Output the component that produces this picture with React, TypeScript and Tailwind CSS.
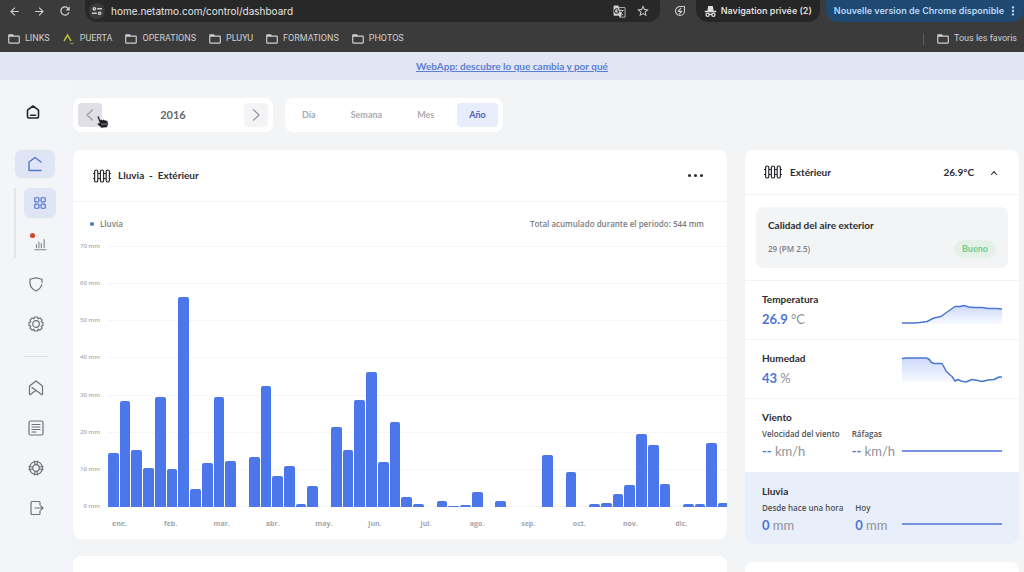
import type { ReactNode } from 'react'
import {
    MdArrowBack,
    MdArrowForward,
    MdFolderOpen,
    MdGTranslate,
    MdMoreVert,
    MdRefresh,
    MdStarBorder,
} from 'react-icons/md'

const MAX_MM = 70

// Weekly rainfall, in mm
const rain = [
    14.6, 28.5, 15.4, 10.4, 29.4, 10.3, 56.2, 4.9, 11.9, 29.4, 12.4, 0, 13.3, 32.4, 8.3, 10.9, 0.7, 5.7,
    0, 21.5, 15.2, 28.7, 36.3, 12, 22.7, 2.8, 0.8, 0, 1.5, 0.2, 0.6, 4.1, 0, 1.5, 0, 0, 0, 13.9, 0, 9.5,
    0, 0.9, 1.2, 3.6, 5.9, 19.6, 16.7, 6.3, 0, 0.7, 0.8, 17.1, 1.1,
]

const ticks = [70, 60, 50, 40, 30, 20, 10, 0]
const months = ['ene.', 'feb.', 'mar.', 'abr.', 'may.', 'jun.', 'jul.', 'ago.', 'sep.', 'oct.', 'nov.', 'dic.']
const periods = ['Día', 'Semana', 'Mes', 'Año']

function Svg({ size = 16, width = 1.2, children }: { size?: number; width?: number; children: ReactNode }) {
    return (
        <svg
            width={size}
            height={size}
            viewBox="0 0 16 16"
            fill="none"
            stroke="currentColor"
            strokeWidth={width}
            strokeLinecap="round"
            strokeLinejoin="round"
            aria-hidden="true"
        >
            {children}
        </svg>
    )
}

function FenceIcon() {
    return (
        <svg width="18" height="14" viewBox="0 0 18 14" fill="none" stroke="currentColor" strokeWidth="1.2" aria-hidden="true">
            <rect x="1.6" y="1" width="3.200" height="12" rx="1.600" />
            <rect x="7.400" y="1" width="3.200" height="12" rx="1.600" />
            <rect x="13.200" y="1" width="3.200" height="12" rx="1.600" />
            <path d="M0 4.500h1.600M0 9.500h1.600M4.800 4.500h2.600M4.800 9.500h2.600M10.600 4.500h2.600M10.600 9.500h2.600M16.400 4.500H18M16.400 9.500H18" />
        </svg>
    )
}

function Bookmark({ label, puerta }: { label: string; puerta?: boolean }) {
    return (
        <a href="#" className="flex items-center gap-1 whitespace-nowrap">
            {puerta ? (
                <svg width="14" height="14" viewBox="0 0 14 14" fill="none" aria-hidden="true">
                    <path d="m2 9 3.500-6L9 9" stroke="#b5bd3a" strokeWidth="1.500" />
                    <path d="M8 11.500h4" stroke="#7f8a3a" strokeWidth="1.200" />
                </svg>
            ) : (
                <MdFolderOpen size={14} />
            )}
            {label}
        </a>
    )
}

function Browser() {
    return (
        <header className="shrink-0 bg-[#3b3b3b] font-['Inter',sans-serif] text-[#cfcfcf]">
            <div className="flex h-[22px] items-center">
                <div className="flex w-[85px] shrink-0 items-center gap-3 pl-2">
                    <button aria-label="Atrás"><MdArrowBack size={13} /></button>
                    <button aria-label="Adelante"><MdArrowForward size={13} /></button>
                    <button aria-label="Recargar"><MdRefresh size={14} /></button>
                </div>
                <div className="flex h-full min-w-0 flex-1 items-center rounded-b-xl bg-[#282828] pr-2.5 pl-1">
                    <span className="flex size-4 items-center justify-center rounded-full bg-[#3b3b3b]">
                        <Svg size={12} width={1.8}>
                            <circle cx="4.500" cy="5" r="1.600" />
                            <path d="M9 5h5M2 11h5" />
                            <circle cx="11.500" cy="11" r="1.600" />
                        </Svg>
                    </span>
                    <input
                        aria-label="Dirección"
                        defaultValue="home.netatmo.com/control/dashboard"
                        className="ml-1.5 min-w-0 flex-1 bg-transparent text-[10px] text-[#e4e4e4] outline-none"
                    />
                    <button aria-label="Traducir" className="mr-2.5"><MdGTranslate size={13} /></button>
                    <button aria-label="Añadir a favoritos"><MdStarBorder size={14} /></button>
                </div>
                <button aria-label="Rendimiento" className="mr-2.5 ml-3.5">
                    <Svg size={12} width={1.4}>
                        <path d="M14 2v6a6 6 0 1 1-6-6zM9 4.500 5.500 8.500h5L7 12" />
                    </Svg>
                </button>
                <div className="flex h-full items-center gap-1 rounded-b-xl bg-[#262626] px-2 text-[9px] font-semibold whitespace-nowrap text-[#dedede]">
                    <Svg size={13} width={1.6}>
                        <path d="M5 6.500 5.800 2h4.400l.8 4.500z" fill="currentColor" />
                        <path d="M1.500 8h13" />
                        <circle cx="4.500" cy="12" r="2" />
                        <circle cx="11.500" cy="12" r="2" />
                        <path d="M6.500 11.500h3" />
                    </Svg>
                    Navigation privée (2)
                </div>
                <button className="ml-1.5 flex h-full items-center rounded-b-xl bg-[#1f4971] pr-1 pl-2 text-[9px] font-semibold whitespace-nowrap text-[#b9d8f7]">
                    Nouvelle version de Chrome disponible
                    <MdMoreVert size={14} className="ml-0.5" />
                </button>
            </div>
            <nav className="flex h-[30px] items-center gap-3 px-[7px] pt-1 font-['Roboto',sans-serif] text-[9px]">
                <Bookmark label="LINKS" />
                <Bookmark label="PUERTA" puerta />
                <Bookmark label="OPERATIONS" />
                <Bookmark label="PLUYU" />
                <Bookmark label="FORMATIONS" />
                <Bookmark label="PHOTOS" />
                <span className="ml-auto h-3 w-px bg-[#5c5c5c]" />
                <Bookmark label="Tous les favoris" />
            </nav>
        </header>
    )
}

function NavButton({ label, children }: { label: string; children: ReactNode }) {
    return (
        <button aria-label={label} className="flex h-10 w-[72px] items-center justify-center text-[#6f7178]">
            {children}
        </button>
    )
}

function Sidebar() {
    return (
        <nav className="w-[72px] shrink-0 bg-[#f4f5f8] pt-[22px]">
            <a href="#" aria-label="Inicio" className="ml-[23px] flex size-5 items-center justify-center text-[#26272b]">
                <Svg width={1.6}>
                    <path d="M2.500 6.200 8 2l5.500 4.200v6.300a1.500 1.500 0 0 1-1.500 1.500H4a1.500 1.500 0 0 1-1.500-1.500zM5.500 11.200h5" />
                </Svg>
            </a>
            <button aria-label="Casa" className="mt-7 ml-[15px] flex h-7 w-10 items-center justify-center rounded-md bg-[#dfe5f5] text-[#5277cf]">
                <Svg width={1.4}>
                    <path d="M14 6 8 1.500 2 6v8.500h12" />
                </Svg>
            </button>
            <div className="mt-2.5 ml-3.5 flex flex-col gap-3 border-l-2 border-[#e3e4e9] pl-2">
                <button aria-label="Panel" className="flex h-[30px] w-8 items-center justify-center rounded-md bg-[#dfe5f5] text-[#5277cf]">
                    <Svg size={14} width={1.4}>
                        <rect x="2" y="2" width="4.800" height="4.800" rx="1" />
                        <rect x="9.200" y="2" width="4.800" height="4.800" rx="1" />
                        <rect x="2" y="9.200" width="4.800" height="4.800" rx="1" />
                        <rect x="9.200" y="9.200" width="4.800" height="4.800" rx="1" />
                    </Svg>
                </button>
                <button aria-label="Gráficos" className="relative flex h-7 w-8 items-center justify-center text-[#85878e]">
                    <Svg size={13} width={1.4}>
                        <path d="M1 14.500h14M3 12V8M6 12V5M9 12V7M12.500 12V2" />
                    </Svg>
                    <span className="absolute top-[3px] left-1.5 size-[5px] rounded-full bg-[#d8412f]" />
                </button>
            </div>
            <div className="mt-1.5">
                <NavButton label="Seguridad">
                    <Svg>
                        <path d="M14 6.500V3.200C12 3.200 10 1.800 8 1.800S4 3.200 2 3.200V7c0 4 3 6.500 6 8 2.500-1.200 5-3.500 5.800-6.300" />
                    </Svg>
                </NavButton>
                <NavButton label="Ajustes">
                    <Svg>
                        <path d="M6.500 1h3l.6 1.800L12 2l2.100 2.100-.9 1.800 1.800.6v3l-1.800.6.9 1.900-2.100 2.100-1.900-.9L9.500 15h-3l-.6-1.800-1.800.9L2 12l.8-1.900L1 9.500v-3l1.800-.6L2 4.100 4.100 2l1.800.8z" />
                        <circle cx="8" cy="8" r="3.300" />
                    </Svg>
                </NavButton>
            </div>
            <div className="mx-6 mt-3 mb-[11px] h-px bg-[#dfe0e5]" />
            <NavButton label="Novedades">
                <Svg>
                    <path d="M7.500 10.500 2.500 14.500c-.5.300-1 0-1-.6V6L8 1l6.500 5v7.900c0 .6-.5.900-1 .600L4 7.500" />
                </Svg>
            </NavButton>
            <NavButton label="Noticias">
                <Svg>
                    <rect x="1" y="1" width="14" height="14" rx="1.500" />
                    <path d="M4 4.500h8M4 7h8M4 9.500h8M4 12h4" />
                </Svg>
            </NavButton>
            <NavButton label="Ayuda">
                <Svg>
                    <circle cx="8" cy="8" r="6.500" />
                    <circle cx="8" cy="8" r="3.300" />
                    <path d="M6.500 1 7 4.700M9.500 1 9 4.700M6.500 15l.5-3.700M9.500 15 9 11.300M1 6.500l3.700.5M1 9.500 4.700 9M15 6.500l-3.700.5M15 9.500 11.300 9" />
                </Svg>
            </NavButton>
            <NavButton label="Cerrar sesión">
                <Svg>
                    <path d="M12 5V2.500c0-.6-.4-1-1-1H4c-.6 0-1 .4-1 1v11c0 .6.4 1 1 1h7c.6 0 1-.4 1-1V11M7 8h8M12.800 5.800 15 8l-2.200 2.200" />
                </Svg>
            </NavButton>
        </nav>
    )
}

function HandCursor() {
    return (
        <svg className="absolute top-3 left-[18px]" width="13" height="14" viewBox="0 0 13 14" aria-hidden="true">
            <path
                d="M1 1.500C1.500.5 2.800.8 3.200 1.800L4.500 5c.5-.8 1.500-.7 2 0 .6-.7 1.600-.5 2 .2.700-.5 1.700-.2 1.900.6.900-.1 1.500.5 1.600 1.400l.2 2.300-1.200 3-5.500.5L1.500 9.500c-.7-1 .3-2 1.400-1.300L3.500 8z"
                fill="#1d1d1f"
                stroke="#f3f3f5"
                strokeWidth=".6"
            />
            <path d="M6 8v2.500M8 8v2.500M10 8v2" stroke="#b9b9bd" strokeWidth=".7" />
        </svg>
    )
}

function Toolbar() {
    return (
        <div className="flex gap-3">
            <div className="flex h-[34px] w-[200px] items-center justify-between rounded-lg bg-white px-[5px]">
                <button aria-label="Año anterior" className="relative flex size-6 items-center justify-center rounded bg-[#dfdfe5] text-[#9a9ba3]">
                    <Svg size={14}><path d="M11 2 4.500 8l6.500 6" /></Svg>
                    <HandCursor />
                </button>
                <span className="text-[11px] font-bold text-[#65676f]">2016</span>
                <button aria-label="Año siguiente" className="flex size-6 items-center justify-center rounded bg-[#f3f4f6] text-[#8e9097]">
                    <Svg size={14}><path d="m5 2 6.500 6L5 14" /></Svg>
                </button>
            </div>
            <div className="flex h-[34px] items-center gap-[11px] rounded-lg bg-white px-[5px] text-[9px] font-bold">
                {periods.map((p) => (
                    <button
                        key={p}
                        className={p === 'Año' ? 'h-6 rounded bg-[#e8edfc] px-3 text-[#4a62bd]' : 'h-6 px-3 text-[#a9abb2]'}
                    >
                        {p}
                    </button>
                ))}
            </div>
        </div>
    )
}

function RainChart() {
    return (
        <section className="overflow-hidden rounded-lg bg-white">
            <div className="flex h-[52px] items-center border-b border-[#f1f2f4] pr-6 pl-5 text-[#2b2c30]">
                <FenceIcon />
                <h2 className="ml-[7px] text-[10px] font-bold whitespace-pre">Lluvia  -  Extérieur</h2>
                <button aria-label="Más opciones" className="ml-auto flex gap-[3px]">
                    <span className="size-[3px] rounded-full bg-current" />
                    <span className="size-[3px] rounded-full bg-current" />
                    <span className="size-[3px] rounded-full bg-current" />
                </button>
            </div>
            <div className="flex h-11 items-center pr-[23px] pl-[17px] font-['Open_Sans',sans-serif] text-[8px] font-semibold text-[#7b7d85]">
                <span className="mr-1.5 size-1 rounded-full bg-[#4c72e0]" />
                Lluvia
                <span className="ml-auto">Total acumulado durante el periodo: 544 mm</span>
            </div>
            <div className="flex h-[261px] gap-2">
                <div className="flex w-[27px] flex-col justify-between text-right font-['Open_Sans',sans-serif] text-[6px] font-semibold text-[#a8aab1]">
                    {ticks.map((t) => (
                        <div key={t} className="flex h-px items-center justify-end whitespace-nowrap">{t} mm</div>
                    ))}
                </div>
                <div className="relative -mr-0.5 flex-1">
                    <div className="absolute inset-0 flex flex-col justify-between">
                        {ticks.map((t) => (
                            <div key={t} className="h-px bg-[#f6f6f8]" />
                        ))}
                    </div>
                    <div className="relative flex h-full items-end gap-px">
                        {rain.map((mm, i) => (
                            <div
                                key={i}
                                className="flex-1 rounded-t-xs bg-[#4c77ea]"
                                style={{ height: `${(mm / MAX_MM) * 100}%` }}
                            />
                        ))}
                    </div>
                </div>
            </div>
            <div className="grid h-8 grid-cols-12 items-center pt-0.5 pr-5 pl-[21px] text-center font-['Open_Sans',sans-serif] text-[7px] font-bold text-[#a4a6ad]">
                {months.map((m) => (
                    <span key={m}>{m}</span>
                ))}
            </div>
        </section>
    )
}

function Sparkline({ id, line, base }: { id: string; line: string; base: number }) {
    return (
        <svg width="100" height="32" viewBox="0 0 100 32" fill="none" className="shrink-0" aria-hidden="true">
            <defs>
                <linearGradient id={id} x1="0" y1="0" x2="0" y2="1">
                    <stop offset="0" stopColor="#4c77ea" stopOpacity=".28" />
                    <stop offset="1" stopColor="#4c77ea" stopOpacity=".04" />
                </linearGradient>
            </defs>
            <path d={`${line}V${base}H0z`} fill={`url(#${id})`} />
            <path d={line} stroke="#4c77d0" strokeWidth="1.500" strokeLinejoin="round" />
        </svg>
    )
}

function Reading({ label, value, unit }: { label?: string; value: string; unit: string }) {
    return (
        <div>
            {label && (
                <p className="font-['Open_Sans',sans-serif] text-[8px] leading-[10px] font-semibold text-[#515259]">{label}</p>
            )}
            <p className="mt-1 text-[13px] leading-[16px] font-bold text-[#4c74d6]">
                {value} <span className="font-normal text-[#8f919a]">{unit}</span>
            </p>
        </div>
    )
}

function OutdoorCard() {
    return (
        <section className="overflow-hidden rounded-lg bg-white text-[10px] font-bold text-[#2b2c30]">
            <div className="flex h-[45px] items-center border-b border-[#f1f2f4] pr-[21px] pl-[19px]">
                <FenceIcon />
                <h2 className="ml-2">Extérieur</h2>
                <span className="ml-auto">26.9°C</span>
                <button aria-label="Contraer" className="ml-4 pt-0.5">
                    <Svg size={8} width={2.2}><path d="m3 11 5-6 5 6" /></Svg>
                </button>
            </div>
            <div className="mx-[11px] mt-3 mb-3 rounded-lg bg-[#f3f4f6] px-3 pt-[11px] pb-2.5">
                <h3 className="leading-[14px]">Calidad del aire exterior</h3>
                <div className="mt-2 flex items-center justify-between">
                    <span className="font-['Open_Sans',sans-serif] text-[8px] font-semibold text-[#7b7d85]">29 (PM 2.5)</span>
                    <span className="flex h-[18px] items-center rounded-full bg-[#e4f1e9] px-2 text-[9px] text-[#6fce85]">Bueno</span>
                </div>
            </div>
            <div className="flex h-[59px] items-center justify-between border-t border-[#f1f2f4] px-[17px] pb-0.5">
                <div>
                    <h3>Temperatura</h3>
                    <Reading value="26.9" unit="°C" />
                </div>
                <Sparkline
                    id="temp"
                    base={31}
                    line="M0 30H12L18 29.500 25 28.500 32 25 39 23.500 43 20.500 48 17 53 13.500 58 13.500 62 12.500 67 14 72 14.500H80L86 15.500H94L100 16"
                />
            </div>
            <div className="flex h-[59px] items-center justify-between border-t border-[#f1f2f4] px-[17px] pb-0.5">
                <div>
                    <h3>Humedad</h3>
                    <Reading value="43" unit="%" />
                </div>
                <Sparkline
                    id="hum"
                    base={30}
                    line="M0 6.500 5 6H24L27 7 29 10 32 11.500H40L42 15 44 19 48 23 50 24.500 53 29 56 27.500 59 29 64 30 70 27.500 76 28.500 80 29.500 86 28 92 27.500 97 25 100 25"
                />
            </div>
            <div className="flex h-[74px] items-center justify-between border-t border-[#f1f2f4] px-[17px] pb-0.5">
                <div>
                    <h3 className="mb-1">Viento</h3>
                    <div className="flex gap-3">
                        <Reading label="Velocidad del viento" value="--" unit="km/h" />
                        <Reading label="Ráfagas" value="--" unit="km/h" />
                    </div>
                </div>
                <div className="mt-8 h-0.5 w-[100px] bg-[#7593df]" />
            </div>
            <div className="flex h-[72px] items-center justify-between bg-[#e9eefb] px-[17px]">
                <div>
                    <h3 className="mb-1">Lluvia</h3>
                    <div className="flex gap-3">
                        <Reading label="Desde hace una hora" value="0" unit="mm" />
                        <Reading label="Hoy" value="0" unit="mm" />
                    </div>
                </div>
                <div className="mt-8 h-0.5 w-[100px] bg-[#7593df]" />
            </div>
        </section>
    )
}

export default function App() {
    return (
        <div className="flex h-screen flex-col overflow-hidden bg-[#f3f4f6] font-['Lato',sans-serif]">
            <Browser />
            <div className="flex h-7 shrink-0 items-center justify-center bg-[#e2e6f4]">
                <a href="#" className="text-[10px] font-bold text-[#5b7fd2] underline">
                    WebApp: descubre lo que cambia y por qué
                </a>
            </div>
            <div className="flex min-h-0 flex-1">
                <Sidebar />
                <main className="flex min-w-0 flex-1 flex-col gap-[18px] pt-[18px] pr-[5px] pl-px">
                    <Toolbar />
                    <div className="flex gap-[18px]">
                        <div className="flex min-w-0 flex-1 flex-col gap-[17px]">
                            <RainChart />
                            <section className="h-12 rounded-lg bg-white" />
                        </div>
                        <div className="flex w-[274px] shrink-0 flex-col gap-[18px]">
                            <OutdoorCard />
                            <section className="h-12 rounded-lg bg-white" />
                        </div>
                    </div>
                </main>
            </div>
        </div>
    )
}
